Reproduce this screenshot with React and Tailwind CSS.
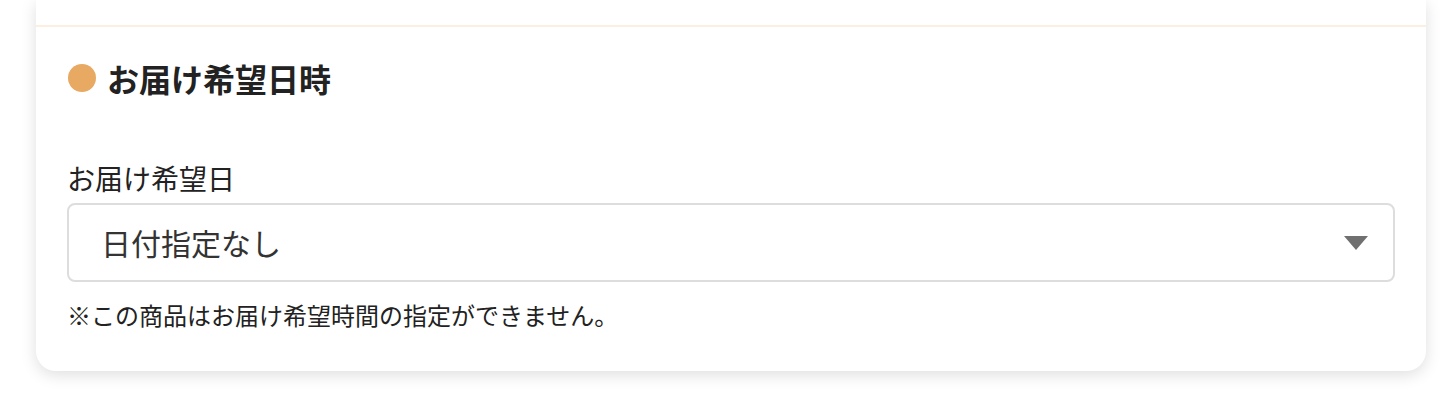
export default function App() {
  return (
    <div
      className="w-[1446px] h-[402px] overflow-hidden bg-white"
      style={{ fontFamily: '"Noto Sans CJK JP", "Noto Sans", sans-serif' }}
    >
      <div className="ml-[36px] mr-[20px] bg-white rounded-b-[20px] shadow-[0_4px_16px_rgba(0,0,0,0.13)]">
        <div className="h-[25px]" />
        <div className="border-t-2 border-[#fcefe2] px-[31px] pt-[27px] pb-[38px]">
          <div className="flex items-center gap-[11px] h-[48px] pl-[1px]">
            <span className="w-[28px] h-[28px] rounded-full bg-[#e8a963] shrink-0" />
            <h2 className="text-[32px] leading-[48px] font-bold text-[#222]">お届け希望日時</h2>
          </div>
          <div className="mt-[55px] text-[28px] leading-[42px] text-[#222]">お届け希望日</div>
          <div className="mt-[4px] h-[79px] border-2 border-[#dddddd] rounded-[8px] flex items-center justify-between pl-[32px] pr-[25px]">
            <span className="text-[30px] leading-[45px] text-[#333]">日付指定なし</span>
            <svg width="24" height="14" viewBox="0 0 24 14" className="shrink-0">
              <path d="M0 0 H24 L12 14 Z" fill="#707070" />
            </svg>
          </div>
          <p className="mt-[15px] text-[24px] leading-[36px] text-[#222]">
            ※この商品はお届け希望時間の指定ができません。
          </p>
        </div>
      </div>
    </div>
  );
}
